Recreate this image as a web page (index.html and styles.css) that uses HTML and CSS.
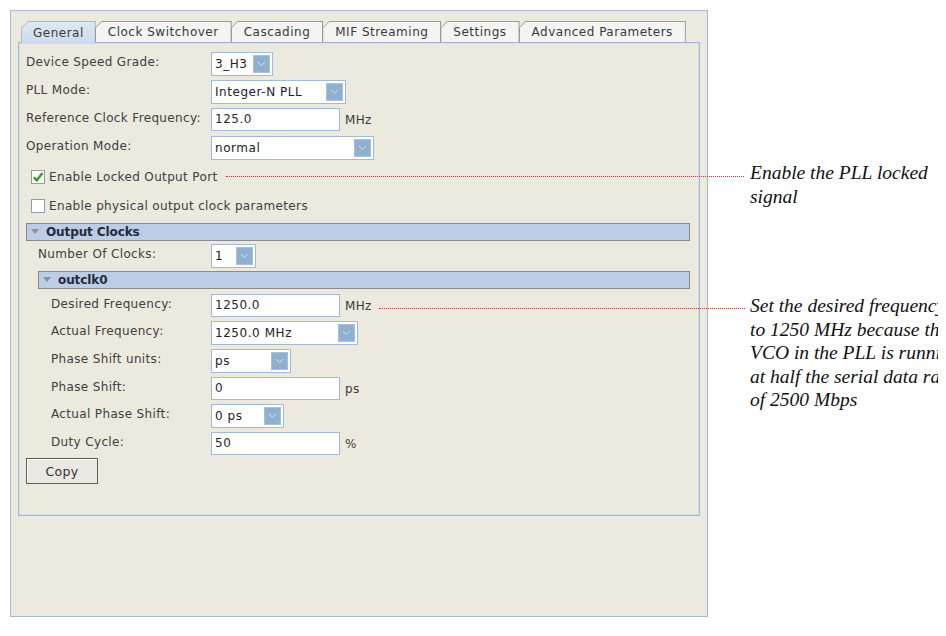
FILE: index.html
```html
<!DOCTYPE html>
<html>
<head>
<meta charset="utf-8">
<link rel="stylesheet" href="styles.css">
</head>
<body>
<div class="page">
  <div class="frame">
    <div class="tabs">
      <div class="tab sel"><div class="tab-in">General</div></div>
      <div class="tab"><div class="tab-in">Clock Switchover</div></div>
      <div class="tab"><div class="tab-in">Cascading</div></div>
      <div class="tab"><div class="tab-in">MIF Streaming</div></div>
      <div class="tab"><div class="tab-in">Settings</div></div>
      <div class="tab"><div class="tab-in">Advanced Parameters</div></div>
    </div>
    <div class="panel">
      <div class="row r-first">
        <div class="lbl l0">Device Speed Grade:</div>
        <div class="combo w62"><span class="val">3_H3</span><span class="arrow"><svg width="9" height="6" viewBox="0 0 9 6"><polyline points="1,1 4.5,4.5 8,1" fill="none" stroke="#d3dde8" stroke-width="1"/></svg></span></div>
      </div>
      <div class="row">
        <div class="lbl l0">PLL Mode:</div>
        <div class="combo w135"><span class="val">Integer-N PLL</span><span class="arrow"><svg width="9" height="6" viewBox="0 0 9 6"><polyline points="1,1 4.5,4.5 8,1" fill="none" stroke="#d3dde8" stroke-width="1"/></svg></span></div>
      </div>
      <div class="row">
        <div class="lbl l0">Reference Clock Frequency:</div>
        <div class="field">125.0</div><span class="unit">MHz</span>
      </div>
      <div class="row">
        <div class="lbl l0">Operation Mode:</div>
        <div class="combo w163"><span class="val">normal</span><span class="arrow"><svg width="9" height="6" viewBox="0 0 9 6"><polyline points="1,1 4.5,4.5 8,1" fill="none" stroke="#d3dde8" stroke-width="1"/></svg></span></div>
      </div>
      <div class="chk-row c1">
        <span class="chk"><svg width="12" height="12" viewBox="0 0 12 12"><path d="M1.8 6.2 L4.8 9.4 L10.4 2" fill="none" stroke="#2f9a27" stroke-width="2.4"/></svg></span>
        <span class="chk-text">Enable Locked Output Port</span>
      </div>
      <div class="chk-row c2">
        <span class="chk"></span>
        <span class="chk-text">Enable physical output clock parameters</span>
      </div>
      <div class="hdr h1"><svg class="tri" width="8" height="6" viewBox="0 0 8 6"><polygon points="0,0 8,0 4,5" fill="#8a8f99"/></svg>Output&nbsp;Clocks</div>
      <div class="sub">
        <div class="row r-num">
          <div class="lbl l1">Number Of Clocks:</div>
          <div class="combo w45"><span class="val">1</span><span class="arrow"><svg width="9" height="6" viewBox="0 0 9 6"><polyline points="1,1 4.5,4.5 8,1" fill="none" stroke="#d3dde8" stroke-width="1"/></svg></span></div>
        </div>
        <div class="hdr h2"><svg class="tri" width="8" height="6" viewBox="0 0 8 6"><polygon points="0,0 8,0 4,5" fill="#8a8f99"/></svg>outclk0</div>
        <div class="sub2">
          <div class="row r-des">
            <div class="lbl l2">Desired Frequency:</div>
            <div class="field">1250.0</div><span class="unit">MHz</span>
          </div>
          <div class="row">
            <div class="lbl l2">Actual Frequency:</div>
            <div class="combo w147"><span class="val">1250.0 MHz</span><span class="arrow"><svg width="9" height="6" viewBox="0 0 9 6"><polyline points="1,1 4.5,4.5 8,1" fill="none" stroke="#d3dde8" stroke-width="1"/></svg></span></div>
          </div>
          <div class="row r4">
            <div class="lbl l2">Phase Shift units:</div>
            <div class="combo w80"><span class="val">ps</span><span class="arrow"><svg width="9" height="6" viewBox="0 0 9 6"><polyline points="1,1 4.5,4.5 8,1" fill="none" stroke="#d3dde8" stroke-width="1"/></svg></span></div>
          </div>
          <div class="row r4">
            <div class="lbl l2">Phase Shift:</div>
            <div class="field">0</div><span class="unit">ps</span>
          </div>
          <div class="row">
            <div class="lbl l2">Actual Phase Shift:</div>
            <div class="combo w73"><span class="val">0 ps</span><span class="arrow"><svg width="9" height="6" viewBox="0 0 9 6"><polyline points="1,1 4.5,4.5 8,1" fill="none" stroke="#d3dde8" stroke-width="1"/></svg></span></div>
          </div>
          <div class="row r4">
            <div class="lbl l2">Duty Cycle:</div>
            <div class="field">50</div><span class="unit">%</span>
          </div>
        </div>
      </div>
      <div class="btn">Copy</div>
    </div>
  </div>
  <div class="notes">
    <div class="note n1">Enable the PLL locked<br>signal</div>
    <div class="note n2">Set the desired frequency<br>to 1250 MHz because the<br>VCO in the PLL is running<br>at half the serial data rate<br>of 2500 Mbps</div>
  </div>
  <div class="leader ld1"></div>
  <div class="leader ld2"></div>
</div>
</body>
</html>
```
FILE: styles.css
```css
* { box-sizing: border-box; }
html, body { margin: 0; padding: 0; background: #ffffff; }
body { font-family: "DejaVu Sans", "Liberation Sans", sans-serif; font-size: 12px; color: #3c3c3c; letter-spacing: 0.35px; }

.page { position: relative; display: flex; align-items: flex-start; width: 946px; height: 636px; overflow: hidden; }

.frame {
  margin: 10px 0 0 10px;
  width: 698px;
  height: 607px;
  background: #ece9df;
  border: 1px solid #a9bbd2;
  padding: 10px 7px 0 7px;
}

.tabs { display: flex; height: 21px; padding-left: 3px; position: relative; z-index: 2; }
.tab {
  height: 21px;
  background: #9a9a9a;
  clip-path: polygon(7px 0, 100% 0, 100% 100%, 0 100%, 0 7px);
  padding: 1px 1px 0 1px;
  margin-right: -1px;
}
.tab-in {
  height: 20px;
  background: #f4f4f2;
  clip-path: polygon(6px 0, 100% 0, 100% 100%, 0 100%, 0 6px);
  display: flex; align-items: center; justify-content: center;
  padding: 0 12px;
  letter-spacing: 0.5px;
  color: #3a3a3a;
}
.tab.sel { background: #a5b9d4; height: 22px; margin-bottom: -1px; }
.tab.sel .tab-in { background: linear-gradient(#dfe8f4, #cddbee); height: 21px; padding: 0 11px; }

.panel {
  height: 474px;
  border: 1px solid #a3b8d4;
  box-shadow: inset 0 0 0 1px #d3deed;
  background: #ece9df;
  padding: 9px 9px 0 7px;
  position: relative;
  z-index: 1;
}

.row { display: flex; align-items: flex-start; height: 24px; margin-top: 3px; }
.lbl { flex: 0 0 auto; padding-top: 3px; color: #404040; white-space: nowrap; }
.l0 { width: 185px; }
.l1 { width: 173px; }
.l2 { width: 160px; }

.combo {
  display: flex; align-items: stretch; height: 24px;
  background: #fff;
  border: 1px solid #a4b9d3;
  padding: 2px 2px 2px 0;
}
.combo .val { flex: 1; padding: 2px 0 0 3px; color: #222; white-space: nowrap; letter-spacing: 0.55px; overflow: hidden; }
.combo .arrow {
  flex: 0 0 17px;
  background: #8fb0ce;
  border: 1px solid #a8c0d8;
  display: flex; align-items: center; justify-content: center;
}
.w62 { width: 62px; }
.w135 { width: 135px; }
.w163 { width: 163px; }
.w45 { width: 45px; }
.w147 { width: 147px; }
.w80 { width: 80px; }
.w73 { width: 73px; }

.field {
  width: 129px; height: 23px;
  background: #fff;
  border: 1px solid #a4b9d3;
  padding: 3px 0 0 3px;
  color: #2a2a2a;
  letter-spacing: 0.5px;
}
.unit { margin-left: 5px; padding-top: 5px; color: #3a3a3a; }

.chk-row { display: flex; align-items: center; height: 26px; padding-left: 5px; }
.chk-row.c1 { margin-top: 4px; }
.chk-row.c2 { margin-top: 3px; }
.chk {
  width: 14px; height: 14px;
  background: #fff;
  border: 1px solid #8d9db2;
  display: flex; align-items: center; justify-content: center;
}
.chk-text { margin-left: 4px; color: #404040; }

.hdr {
  display: flex; align-items: center;
  height: 18px;
  background: #bccde5;
  border: 1px solid #8b8b8b;
  font-weight: bold;
  color: #1f2a3a;
  padding-left: 4px;
  letter-spacing: -0.1px;
}
.hdr .tri { margin-right: 7px; }
.hdr.h1 { margin-top: 4px; }
.hdr.h2 { margin-top: 3px; }

.sub { padding-left: 12px; }
.sub2 { padding-left: 13px; }
.row.r-num { margin-top: 3px; }
.row.r-des { margin-top: 5px; }
.row.r4 { margin-top: 4px; }
.panel > .row { margin-top: 4px; }
.panel > .row.r-first { margin-top: 0; }

.btn {
  margin-top: 2px;
  width: 72px; height: 26px;
  background: #ebe8e1;
  border: 1px solid #5e5e5e;
  box-shadow: inset 1px 1px 0 #ffffff;
  display: flex; align-items: center; justify-content: center;
  color: #333;
  font-size: 12.5px;
}

.notes {
  margin-left: 42px;
  width: 188px;
  overflow: hidden;
  font-family: "Liberation Serif", "Times New Roman", serif;
  font-style: italic;
  font-size: 19.5px;
  line-height: 23.5px;
  letter-spacing: 0;
  color: #111;
}
.note { white-space: nowrap; }
.n1 { margin-top: 161px; }
.n2 { margin-top: 86px; }

.leader { position: absolute; z-index: 5; height: 0; border-top: 1px dotted #cc3a3a; }
.ld1 { left: 226px; top: 176px; width: 518px; }
.ld2 { left: 379px; top: 308px; width: 366px; }
```
